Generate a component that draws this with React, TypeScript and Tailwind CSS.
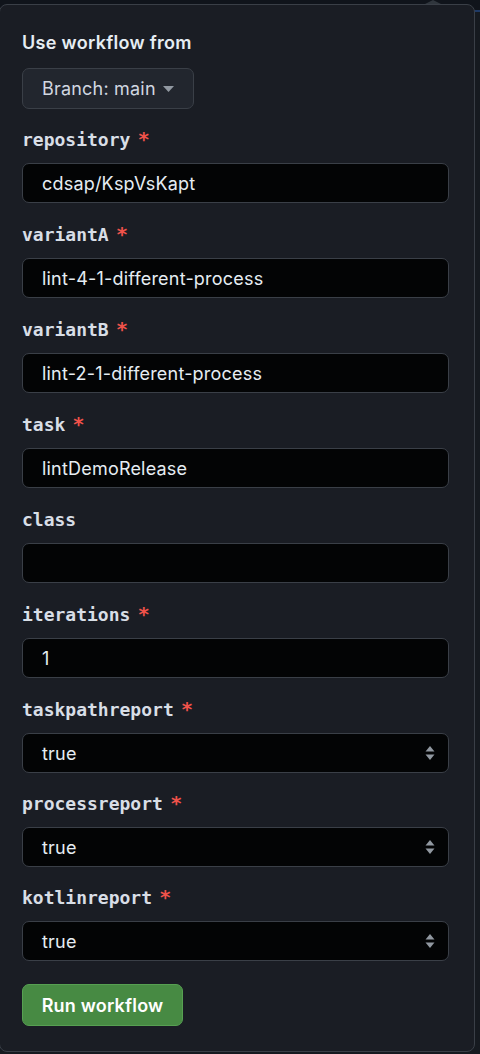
import React from 'react';

type Field = {
  name: string;
  value: string;
  required: boolean;
  select?: boolean;
};

const fields: Field[] = [
  { name: 'repository', value: 'cdsap/KspVsKapt', required: true },
  { name: 'variantA', value: 'lint-4-1-different-process', required: true },
  { name: 'variantB', value: 'lint-2-1-different-process', required: true },
  { name: 'task', value: 'lintDemoRelease', required: true },
  { name: 'class', value: '', required: false },
  { name: 'iterations', value: '1', required: true },
  { name: 'taskpathreport', value: 'true', required: true, select: true },
  { name: 'processreport', value: 'true', required: true, select: true },
  { name: 'kotlinreport', value: 'true', required: true, select: true },
];

const SelectArrows = () => (
  <svg width="10" height="16" viewBox="0 0 10 16" className="shrink-0">
    <path d="M5 1 L9.5 6.5 H0.5 Z" fill="#9198a1" />
    <path d="M5 15 L9.5 9.5 H0.5 Z" fill="#9198a1" />
  </svg>
);

const App = () => {
  return (
    <div className="relative h-[1054px] w-[480px] overflow-hidden bg-[#161a20] font-['Inter',sans-serif]">
      {/* top strip behind the popover */}
      <div className="h-[12px] bg-[#10141b] border-b-2 border-[#1f3a66]" />

      {/* popover pointer */}
      <div className="absolute left-[423px] top-0 h-0 w-0 border-x-[10px] border-b-[5px] border-x-transparent border-b-[#30363d]" />

      {/* Popover panel */}
      <div className="absolute left-[-1px] top-[4px] h-[1048px] w-[476px] rounded-[8px] border border-[#3a3f47] bg-[#1a1d24] px-[22px] pt-[26px]">
        <h2 className="text-[18px] leading-[24px] font-semibold tracking-[0.3px] text-[#e6edf3]">Use workflow from</h2>

        <button
          type="button"
          className="mt-[13px] flex h-[41px] items-center gap-[7px] rounded-[7px] border border-[#3a3f47] bg-[#22262e] pl-[19px] pr-[19px] text-[18px] tracking-[0.2px] text-[#d1d7e0]"
        >
          Branch: main
          <svg width="11" height="6" viewBox="0 0 11 6">
            <path d="M0 0 H11 L5.5 6 Z" fill="#9198a1" />
          </svg>
        </button>

        <div className="mt-[18px] flex flex-col">
          {fields.map((f) => (
            <div key={f.name} className={`flex flex-col ${f.select ? 'mb-[18px]' : 'mb-[19px]'}`}>
              <label className="flex h-[24px] items-center gap-[8px] font-['DejaVu_Sans_Mono',monospace] text-[18px] font-bold text-[#d8dee6]">
                {f.name}
                {f.required && <span className="text-[#f0524a] font-['DejaVu_Sans',sans-serif] text-[20px]">*</span>}
              </label>
              <div className="mt-[12px] flex h-[40px] w-[427px] items-center justify-between rounded-[7px] border border-[#3a3f47] bg-[#030405] pl-[19px] pr-[13px] text-[18px] tracking-[0.2px] text-[#e6edf3]">
                <span>{f.value}</span>
                {f.select && <SelectArrows />}
              </div>
            </div>
          ))}
        </div>

        <button
          type="button"
          className="mt-[5px] flex h-[42px] w-[161px] items-center justify-center rounded-[7px] border border-[#57a052] bg-[#478a43] text-[18px] font-semibold tracking-[0.2px] text-white"
        >
          Run workflow
        </button>
      </div>
    </div>
  );
};

export default App;
